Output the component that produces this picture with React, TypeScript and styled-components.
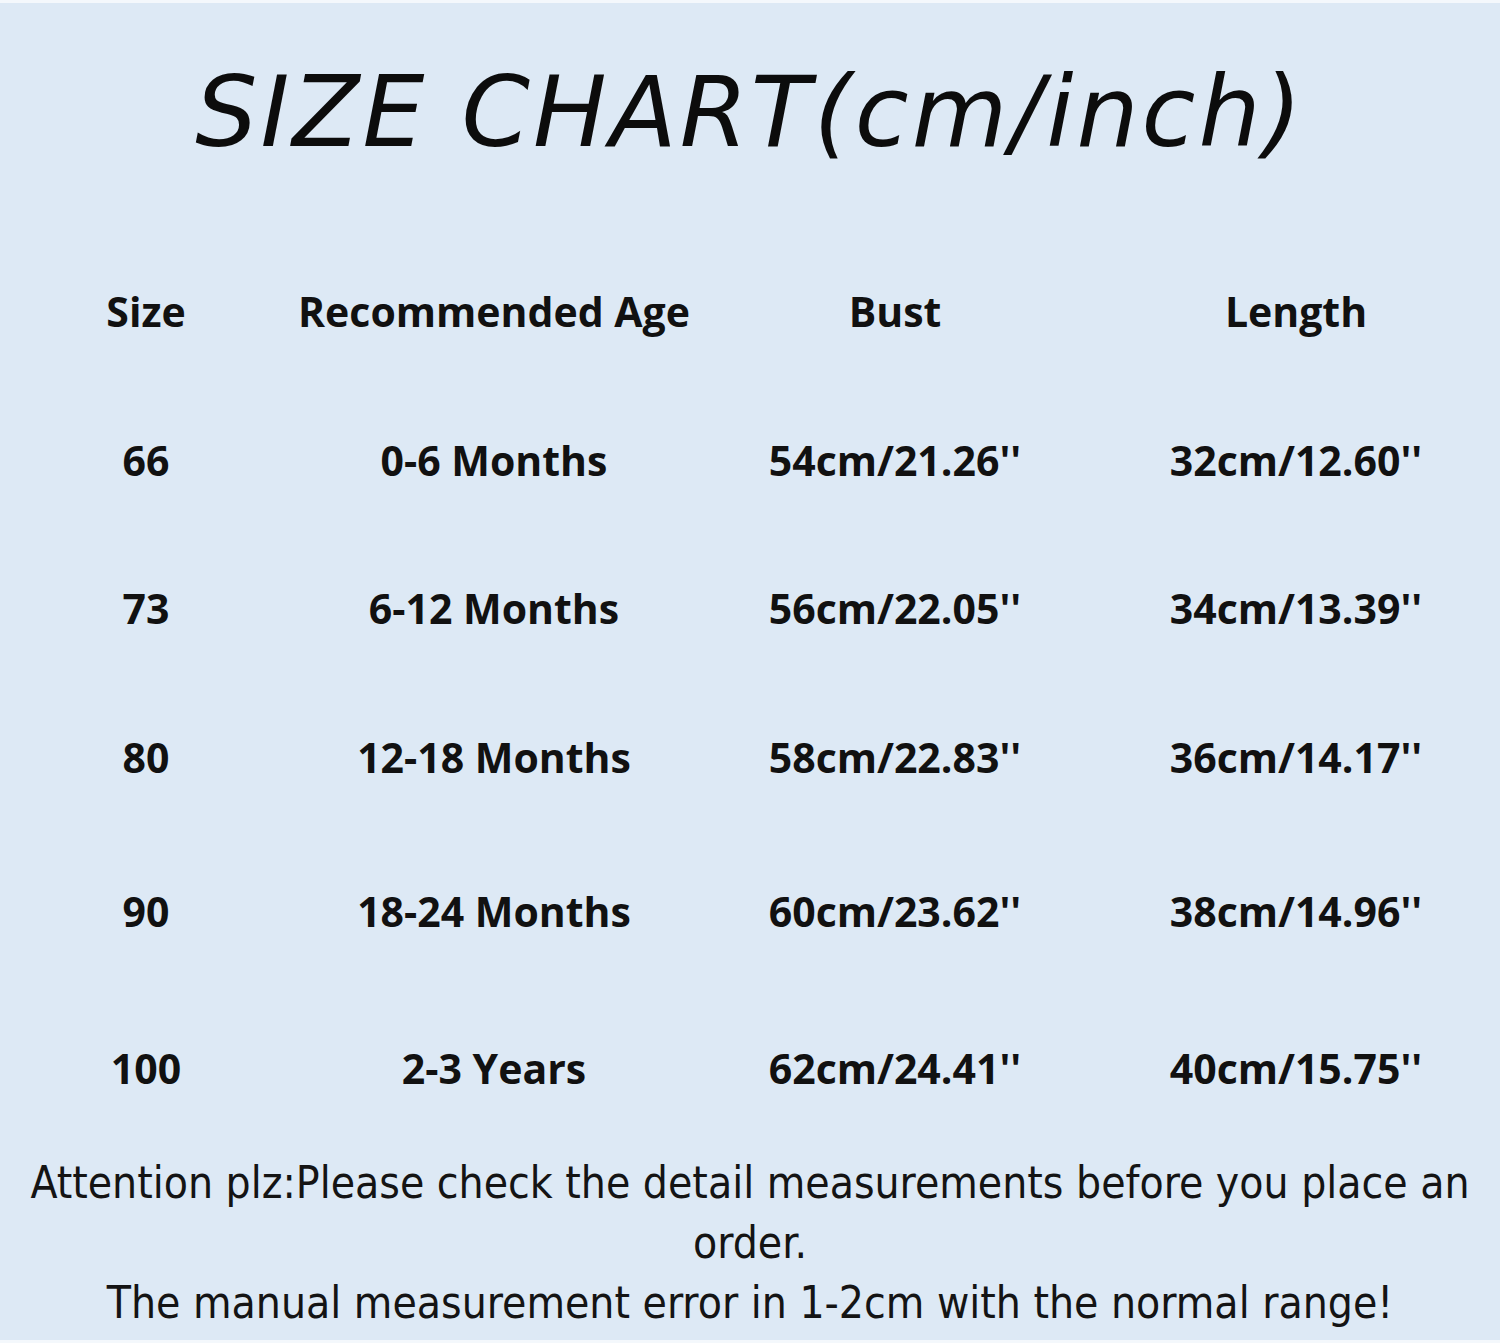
import React from 'react';
import styled, { createGlobalStyle } from 'styled-components';

const GlobalStyle = createGlobalStyle`
  html, body {
    margin: 0;
    padding: 0;
    background: #ffffff;
  }
`;

interface SizeRow {
  size: string;
  age: string;
  bust: string;
  length: string;
}

const rows: SizeRow[] = [
  { size: '66', age: '0-6 Months', bust: "54cm/21.26''", length: "32cm/12.60''" },
  { size: '73', age: '6-12 Months', bust: "56cm/22.05''", length: "34cm/13.39''" },
  { size: '80', age: '12-18 Months', bust: "58cm/22.83''", length: "36cm/14.17''" },
  { size: '90', age: '18-24 Months', bust: "60cm/23.62''", length: "38cm/14.96''" },
  { size: '100', age: '2-3 Years', bust: "62cm/24.41''", length: "40cm/15.75''" },
];

const Page = styled.div`
  width: 1500px;
  height: 1343px;
  box-sizing: border-box;
  border-top: 3px solid #f4f8fc;
  border-bottom: 3px solid #f4f8fc;
  background: #dde9f5;
  color: #111111;
  display: flex;
  flex-direction: column;
  overflow: hidden;
`;

const Title = styled.h1`
  margin: 0;
  height: 233px;
  box-sizing: border-box;
  padding-bottom: 16px;
  display: flex;
  align-items: center;
  justify-content: center;
  font-family: 'DejaVu Sans', sans-serif;
  font-weight: 400;
  font-style: oblique;
  font-size: 98px;
  letter-spacing: 3px;
  color: #0c0c0c;
`;

const Table = styled.div`
  display: grid;
  grid-template-columns: 292px 404px 398px 404px;
  grid-template-rows: 150px 148px 148px 150px 158px 156px;
  align-items: center;
  justify-items: center;
  font-family: 'Open Sans', 'Noto Sans', sans-serif;
  font-weight: 700;
`;

const Cell = styled.div`
  font-size: 41px;
  line-height: 1;
  white-space: nowrap;
  color: #111111;
`;

const Notes = styled.div`
  padding: 7px 20px 0;
  text-align: center;
  font-family: 'DejaVu Sans Condensed', 'Liberation Sans Narrow', 'DejaVu Sans', sans-serif;
  font-stretch: condensed;
  font-size: 44px;
  line-height: 60px;
  color: #141414;
`;

const Line = styled.p`
  margin: 0;
`;

export default function App() {
  return (
    <>
      <GlobalStyle />
      <Page>
        <Title>SIZE CHART(cm/inch)</Title>
        <Table>
          <Cell>Size</Cell>
          <Cell>Recommended Age</Cell>
          <Cell>Bust</Cell>
          <Cell>Length</Cell>
          {rows.map((r) => (
            <React.Fragment key={r.size}>
              <Cell>{r.size}</Cell>
              <Cell>{r.age}</Cell>
              <Cell>{r.bust}</Cell>
              <Cell>{r.length}</Cell>
            </React.Fragment>
          ))}
        </Table>
        <Notes>
          <Line>Attention plz:Please check the detail measurements before you place an order.</Line>
          <Line>The manual measurement error in 1-2cm with the normal range!</Line>
        </Notes>
      </Page>
    </>
  );
}
